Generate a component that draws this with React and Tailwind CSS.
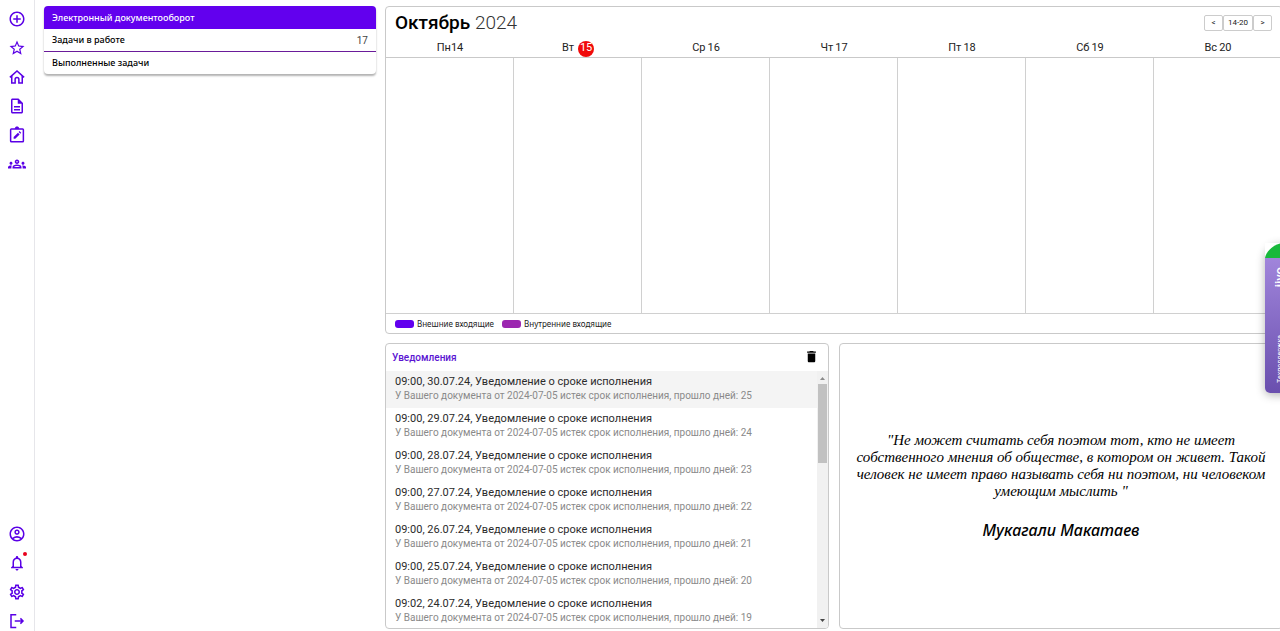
import clsx from "clsx";
import {
  MdAddCircleOutline,
  MdDelete,
  MdOutlineAccountCircle,
  MdOutlineDescription,
  MdOutlineGroups,
  MdOutlineNotifications,
  MdOutlineSettings,
  MdStarOutline,
} from "react-icons/md";

const HomeIcon = ({ size }) => (
  <svg width={size} height={size} viewBox="0 0 24 24" fill="none" stroke="currentColor" strokeWidth="2">
    <path d="M2.500 12.500 12 4l9.500 8.500" />
    <path d="M5 10.500V20h4.500v-5a2.500 2.500 0 0 1 5 0v5H19v-9.500" />
  </svg>
);

const ClipboardEditIcon = ({ size }) => (
  <svg width={size} height={size} viewBox="0 0 24 24" fill="none" stroke="currentColor" strokeWidth="2">
    <rect x="3.500" y="4" width="17" height="17" rx="1" />
    <path d="M9.500 3.500a2.500 2.500 0 0 1 5 0z" fill="currentColor" strokeWidth="1" />
    <path d="M7.500 17v-2.200l5.800-5.800 2.200 2.200L9.700 17zM14.200 8l1.200-1.200 2.200 2.200-1.200 1.200z" fill="currentColor" stroke="none" />
  </svg>
);

const LogoutIcon = ({ size }) => (
  <svg width={size} height={size} viewBox="0 0 24 24" fill="none" stroke="currentColor" strokeWidth="2">
    <path d="M11 3.500H4v17h7M9 12h11M16.500 8.500 20 12l-3.500 3.500" />
  </svg>
);

const topLinks = [
  { label: "Создать", icon: MdAddCircleOutline },
  { label: "Избранное", icon: MdStarOutline },
  { label: "Главная", icon: HomeIcon },
  { label: "Документы", icon: MdOutlineDescription },
  { label: "Задачи", icon: ClipboardEditIcon },
  { label: "Сотрудники", icon: MdOutlineGroups },
];

const bottomLinks = [
  { label: "Профиль", icon: MdOutlineAccountCircle },
  { label: "Уведомления", icon: MdOutlineNotifications, dot: true },
  { label: "Настройки", icon: MdOutlineSettings },
  { label: "Выход", icon: LogoutIcon },
];

const days = [
  { name: "Пн", date: 14, tight: true },
  { name: "Вт", date: 15, today: true },
  { name: "Ср", date: 16 },
  { name: "Чт", date: 17 },
  { name: "Пт", date: 18 },
  { name: "Сб", date: 19 },
  { name: "Вс", date: 20 },
];

const notifications = [
  { time: "09:00", date: "30.07.24", passed: 25 },
  { time: "09:00", date: "29.07.24", passed: 24 },
  { time: "09:00", date: "28.07.24", passed: 23 },
  { time: "09:00", date: "27.07.24", passed: 22 },
  { time: "09:00", date: "26.07.24", passed: 21 },
  { time: "09:00", date: "25.07.24", passed: 20 },
  { time: "09:02", date: "24.07.24", passed: 19 },
];

const NavLinks = ({ items }) => (
  <ul className="flex flex-col items-center gap-[11px]">
    {items.map(({ label, icon: Icon, dot }) => (
      <li key={label}>
        <a href="#" aria-label={label} className="relative block text-[#5a00e6]">
          <Icon size={18} />
          {dot && <span className="absolute -top-0.5 -right-px h-1 w-1 rounded-full bg-[#e8001c]" />}
        </a>
      </li>
    ))}
  </ul>
);

const Sidebar = () => (
  <nav className="flex w-[35px] shrink-0 flex-col justify-between border-r border-[#e6e6ea] pt-2.5 pb-px">
    <NavLinks items={topLinks} />
    <NavLinks items={bottomLinks} />
  </nav>
);

const TaskPanel = () => (
  <section className="w-[332px] shrink-0 self-start overflow-hidden rounded-[4px] font-['Noto_Sans',sans-serif] text-[9px] font-medium text-black shadow-[0_2px_2px_rgba(0,0,0,0.3)]">
    <h2 className="flex h-[23px] items-center bg-[#6200ee] px-2 text-white">Электронный документооборот</h2>
    <a href="#" className="flex h-[23px] items-center justify-between border-b border-[#6a1b9a] px-2">
      Задачи в работе
      <span className="font-['Roboto',sans-serif] text-[10px] font-normal text-[#444]">17</span>
    </a>
    <a href="#" className="flex h-[22px] items-center px-2">
      Выполненные задачи
    </a>
  </section>
);

const Calendar = () => (
  <section className="flex flex-col rounded-[4px] border border-[#c9c9c9] font-['Roboto',sans-serif]">
    <header className="flex h-8 items-center justify-between pr-2.5 pl-[9px]">
      <h1 className="text-[19px] font-medium text-black">
        Октябрь <span className="font-light text-[#333]">2024</span>
      </h1>
      <div className="flex text-[8px] text-[#222]">
        <button className="h-4 w-[19px] rounded-[2px] border border-[#ccc]">&lt;</button>
        <button className="h-4 w-[30px] rounded-[2px] border border-[#ccc]">14-20</button>
        <button className="h-4 w-[19px] rounded-[2px] border border-[#ccc]">&gt;</button>
      </div>
    </header>
    <div className="grid h-[19px] grid-cols-7 border-b border-[#c9c9c9] pt-px text-[11px] text-[#222]">
      {days.map((day) => (
        <div key={day.date} className={clsx("flex items-center justify-center", day.today ? "gap-1" : !day.tight && "gap-0.5")}>
          <span>{day.name}</span>
          <span className={clsx(day.today && "flex h-4 w-4 items-center justify-center rounded-full bg-[#f00a0a] text-white")}>
            {day.date}
          </span>
        </div>
      ))}
    </div>
    <div className="grid h-[255px] grid-cols-7 divide-x divide-[#d0d0d0]">
      {days.map((day) => (
        <div key={day.date} />
      ))}
    </div>
    <footer className="flex h-5 items-center gap-2 border-t border-[#d0d0d0] px-[9px] font-['Noto_Sans',sans-serif] text-[8px] text-[#222]">
      <span className="flex items-center gap-[3px]">
        <i className="h-2 w-[19px] rounded-[3px] bg-[#6200ee]" />
        Внешние входящие
      </span>
      <span className="flex items-center gap-[3px]">
        <i className="h-2 w-[19px] rounded-[3px] bg-[#9c27b0]" />
        Внутренние входящие
      </span>
    </footer>
  </section>
);

const Scrollbar = () => (
  <div className="flex w-[11px] shrink-0 flex-col items-center bg-[#f1f1f1]">
    <svg width="11" height="13" viewBox="0 0 11 13">
      <path d="M3 9h5L5.500 6z" fill="#8a8a8a" />
    </svg>
    <div className="h-[79px] w-[9px] bg-[#c1c1c1]" />
    <svg width="11" height="13" viewBox="0 0 11 13" className="mt-auto">
      <path d="M3 4h5L5.500 7z" fill="#444" />
    </svg>
  </div>
);

const Notifications = () => (
  <section className="flex min-h-0 flex-col overflow-hidden rounded-[4px] border border-[#c9c9c9] font-['Roboto',sans-serif]">
    <header className="flex h-[27px] shrink-0 items-center justify-between pr-[9px] pl-1.5">
      <h2 className="text-[10px] font-medium text-[#5a14d2]">Уведомления</h2>
      <button aria-label="Удалить" className="pb-0.5 text-black">
        <MdDelete size={15} />
      </button>
    </header>
    <div className="flex min-h-0 flex-1">
      <ul className="min-w-0 flex-1 overflow-hidden">
        {notifications.map((item, i) => (
          <li key={item.date} className={clsx("h-[37px] px-[9px] pt-1", i === 0 && "bg-[#f4f4f4]")}>
            <p className="text-[11px] leading-[14px] text-[#2b2b2b]">
              {item.time}, {item.date}, Уведомление о сроке исполнения
            </p>
            <p className="text-[10px] leading-[14px] text-[#8a8a8a]">
              У Вашего документа от 2024-07-05 истек срок исполнения, прошло дней: {item.passed}
            </p>
          </li>
        ))}
      </ul>
      <Scrollbar />
    </div>
  </section>
);

const Quote = () => (
  <section className="flex flex-col items-center justify-center gap-5 rounded-[4px] border border-[#c9c9c9] px-3 text-center text-black italic">
    <blockquote className="font-['Liberation_Serif',serif] text-[15px] leading-[17px]">
      "Не может считать себя поэтом тот, кто не имеет собственного мнения об обществе, в котором он живет. Такой
      человек не имеет право называть себя ни поэтом, ни человеком умеющим мыслить "
    </blockquote>
    <cite className="font-['Noto_Sans',sans-serif] text-[16px] leading-5 font-medium">Мукагали Макатаев</cite>
  </section>
);

const ChatWidget = () => (
  <button className="absolute top-[243px] -right-[15px] flex h-[150px] w-[30px] flex-col items-center justify-between rounded-t-[15px] rounded-b-[5px] bg-linear-to-b from-[#a78be0] to-[#6a4fae] pt-6 pb-2.5 font-['Roboto',sans-serif] text-white shadow-[0_2px_10px_rgba(0,0,0,0.3)]">
    <svg width="30" height="15" viewBox="0 0 30 15" className="absolute top-0 left-0">
      <path d="M0 0h30v15H0z" fill="#fff" />
      <path d="M0 15C1 9 7 2 17 0h13c-2 9-8 15-17 15z" fill="#18b93c" />
    </svg>
    <span className="rotate-180 text-[13px] leading-3 font-medium [writing-mode:vertical-rl]">jivo</span>
    <span className="rotate-180 text-[7px] leading-3 [writing-mode:vertical-rl]">Техподдержка</span>
  </button>
);

const App = () => (
  <div className="relative flex h-screen overflow-hidden bg-white">
    <Sidebar />
    <main className="-mr-[3px] flex min-w-0 flex-1 gap-[9px] pt-1.5 pb-0.5 pl-[9px]">
      <TaskPanel />
      <div className="flex min-w-0 flex-1 flex-col gap-[9px]">
        <Calendar />
        <div className="grid min-h-0 flex-1 grid-cols-2 gap-2.5">
          <Notifications />
          <Quote />
        </div>
      </div>
    </main>
    <ChatWidget />
  </div>
);

export default App;
